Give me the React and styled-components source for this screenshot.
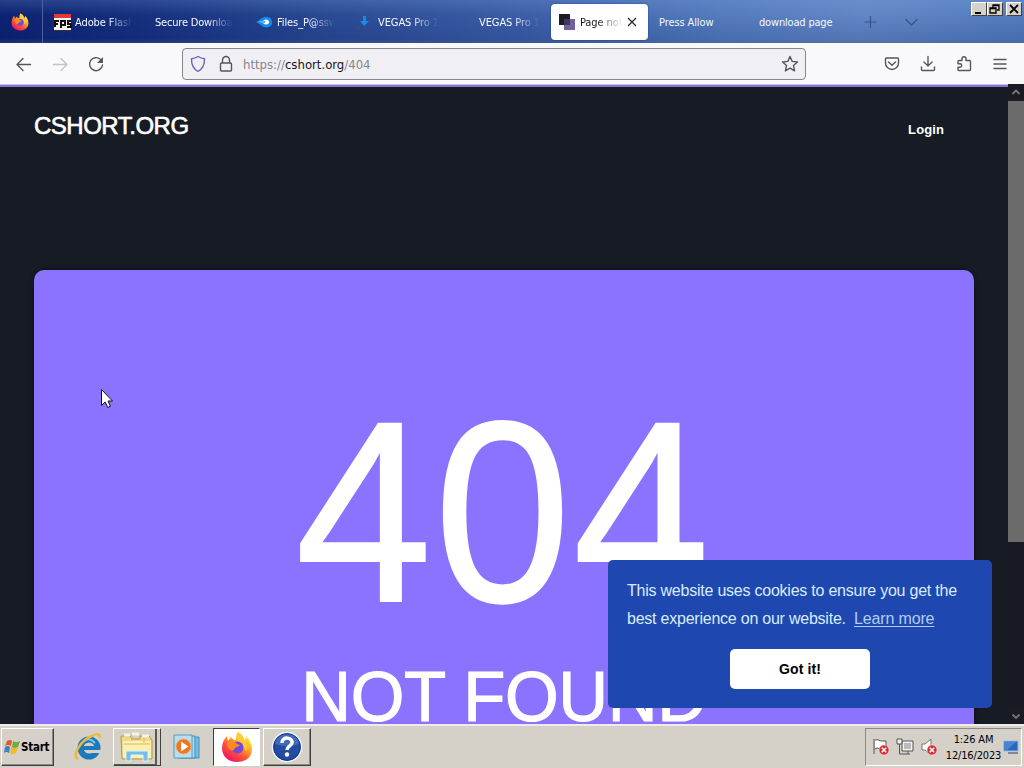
import React from "react";
import styled, { createGlobalStyle } from "styled-components";

const Global = createGlobalStyle`
  * { box-sizing: border-box; }
  body { margin: 0; background: #171a22; overflow: hidden; }
`;

const ui = `"DejaVu Sans Condensed", "DejaVu Sans", sans-serif`;
const web = `"Liberation Sans", Arial, sans-serif`;

const Screen = styled.div`
  width: 1024px;
  height: 768px;
  display: flex;
  flex-direction: column;
  overflow: hidden;
  font-family: ${ui};
  font-stretch: condensed;
`;

/* Tab strip */
const TabStrip = styled.header`
  position: relative;
  height: 43px;
  flex: none;
  display: flex;
  background:
    linear-gradient(180deg, rgba(130, 170, 225, 0.22), rgba(255, 255, 255, 0) 35%, rgba(0, 20, 90, 0.14) 90%, rgba(60, 80, 110, 0.4)),
    linear-gradient(97deg, #0b2270 0%, #16307e 14%, #2a4a93 32%, #3d5fa8 52%, #537bbd 70%, #6186c4 84%, #537cbd 100%);
`;
const HomeTab = styled.div`
  width: 43px;
  border-right: 1px solid #4a62a2;
  padding: 13px 0 0 11px;
  margin-right: 3px;
`;
const Tab = styled.div`
  width: ${(p) => p.$width || 101}px;
  height: 36px;
  margin: 4px ${(p) => (p.$active ? 3 : 0)}px 0 ${(p) => (p.$active ? 1 : 0)}px;
  padding: 2px 8px 0;
  display: flex;
  align-items: center;
  gap: 3px;
  border-radius: 4px;
  color: ${(p) => (p.$active ? "#15141a" : "#f4f8ff")};
  background: ${(p) => (p.$active ? "#fff" : "transparent")};
  box-shadow: ${(p) => (p.$active ? "0 0 2px #203d7d" : "none")};
`;
const TabIcon = styled.span`
  width: 18px;
  height: 18px;
  flex: none;
  svg { display: block; }
`;
const TabLabel = styled.span`
  flex: ${(p) => (p.$width ? "none" : 1)};
  width: ${(p) => (p.$width ? p.$width + "px" : "auto")};
  min-width: 0;
  overflow: hidden;
  white-space: nowrap;
  font-size: 11px;
  line-height: 16px;
  letter-spacing: ${(p) => p.$spacing ?? -0.1}px;
  mask-image: ${(p) => (p.$full ? "none" : "linear-gradient(90deg, #000 calc(100% - 26px), transparent)")};
`;
const StripIcon = styled.span`
  width: 41px;
  padding-top: 14px;
  text-align: center;
`;
const WindowButtons = styled.div`
  position: absolute;
  top: 2px;
  right: 2px;
  display: flex;
`;
const WindowButton = styled.span`
  width: 16px;
  height: 14px;
  margin-left: ${(p) => (p.$apart ? 3 : 0)}px;
  background: #d6d2ca;
  border: 1px solid;
  border-color: #fff #404040 #404040 #fff;
  svg { display: block; }
`;

/* Navigation toolbar */
const NavBar = styled.div`
  height: 41px;
  flex: none;
  display: flex;
  align-items: center;
  background: #f9f9fb;
  padding: 1px 14px 0;
`;
const NavButton = styled.span`
  width: 20px;
  height: 20px;
  flex: none;
  margin-right: ${(p) => p.$gap ?? 16}px;
  svg { display: block; }
`;
const UrlBar = styled.div`
  width: 624px;
  height: 32px;
  flex: none;
  margin: 0 76px 0 60px;
  display: flex;
  align-items: center;
  border: 1px solid #85858f;
  border-radius: 4px;
  background: #f0f0f4;
  padding: 0 5px;
`;
const UrlText = styled.span`
  flex: 1;
  margin-left: 7px;
  font-size: 13px;
  letter-spacing: 0;
  color: #85858d;
  b { font-weight: 400; color: #15141a; }
`;
const UrlIcon = styled.span`
  width: 20px;
  margin-right: ${(p) => p.$gap || 0}px;
  svg { display: block; }
`;

/* Web page */
const Viewport = styled.div`
  height: 640px;
  flex: none;
  position: relative;
  display: flex;
  background: #171b23;
`;
const Page = styled.main`
  width: 1008px;
  height: 640px;
  border-top: 1px solid #cbc3ec;
  box-shadow: inset 0 2px #8874c8;
  overflow: hidden;
  padding: 2px 34px 0;
  font-family: ${web};
  font-stretch: normal;
  color: #fff;
`;
const SiteHeader = styled.div`
  height: 183px;
  display: flex;
  justify-content: space-between;
  padding: 25px 30px 0 0;
`;
const Brand = styled.div`
  font-size: 24px;
  line-height: 28px;
  letter-spacing: -0.5px;
  -webkit-text-stroke: 0.6px #fff;
`;
const Login = styled.div`
  margin-top: 9px;
  font-size: 13px;
  line-height: 18px;
  font-weight: 700;
  letter-spacing: 0.1px;
`;
const Hero = styled.section`
  height: 520px;
  border-radius: 10px 10px 0 0;
  background: #8b73ff;
  box-shadow: 0 0 4px #0c0d14;
  padding-top: 104px;
  text-align: center;
  white-space: nowrap;
`;
const ErrorCode = styled.div`
  font-size: 246px;
  line-height: 275px;
  height: 275px;
  letter-spacing: 2px;
  padding-right: 1px;
  -webkit-text-stroke: 1.6px #fff;
  transform: scaleY(1.05);
`;
const ErrorText = styled.div`
  margin-top: 9px;
  font-size: 69px;
  line-height: 80px;
  letter-spacing: -0.4px;
  -webkit-text-stroke: 1.1px #fff;
  transform: scaleY(1.02);
`;
const ScrollBar = styled.div`
  width: 16px;
  display: flex;
  flex-direction: column;
  background: #171a22;
`;
const ScrollArrow = styled.span`
  height: 17px;
  background: #191c23;
  svg { display: block; }
`;
const ScrollThumb = styled.span`
  height: 441px;
  background: #6b6b6b;
  margin-bottom: auto;
`;
const Cookie = styled.aside`
  position: absolute;
  left: 608px;
  top: 476px;
  width: 384px;
  height: 148px;
  border-radius: 5px;
  background: #1e48b0;
  color: #d8ecff;
  font-family: ${web};
  font-stretch: normal;
  padding: 17px 19px;
  display: flex;
  flex-direction: column;
`;
const CookieText = styled.p`
  margin: 0;
  font-size: 16px;
  line-height: 28px;
  white-space: nowrap;
  letter-spacing: -0.23px;
`;
const Learn = styled.a`
  margin-left: 4px;
  color: #b2cdf1;
  letter-spacing: -0.15px;
  text-decoration: underline;
  text-underline-offset: 2px;
`;
const Accept = styled.button`
  width: 140px;
  height: 40px;
  margin: 16px 0 0 103px;
  flex: none;
  border: 0;
  border-radius: 5px;
  background: #fff;
  color: #000;
  font: 700 14px ${web};
  letter-spacing: 0.1px;
`;
const Pointer = styled.span`
  position: absolute;
  left: 100px;
  top: 304px;
`;

/* Taskbar */
const Taskbar = styled.footer`
  height: 44px;
  flex: none;
  display: flex;
  align-items: flex-start;
  background: #d5d1c9;
  border-top: 2px solid #eeece7;
  padding: 2px 2px 0 1px;
`;
const StartButton = styled.div`
  width: 53px;
  height: 38px;
  margin-right: 15px;
  display: flex;
  align-items: center;
  padding-left: 2px;
  font: 700 11.5px "DejaVu Sans Condensed", sans-serif;
  font-stretch: condensed;
  letter-spacing: -0.25px;
  color: #000;
  border: 1px solid;
  border-color: #fff #404040 #404040 #fff;
  box-shadow: inset -1px -1px #8c8a84;
`;
const TaskButton = styled.div`
  width: ${(p) => p.$width || 47}px;
  height: 38px;
  margin-right: ${(p) => p.$gap || 0}px;
  display: flex;
  align-items: center;
  justify-content: center;
  border: 1px solid;
  border-color: ${(p) => (p.$flat ? "transparent" : p.$pressed ? "#404040 #fff #fff #404040" : "#fff #404040 #404040 #fff")};
  background: ${(p) => (p.$pressed ? "#fff" : "transparent")};
  box-shadow: ${(p) => (p.$stack ? "inset -3px 0 #d5d1c9, inset -5px -1px #5a5955" : p.$flat || p.$pressed ? "none" : "inset -1px -1px #8c8a84")};
`;
const Tray = styled.div`
  width: 157px;
  height: 38px;
  margin-left: auto;
  display: flex;
  align-items: center;
  gap: 6px;
  padding-left: 6px;
  border: 1px solid;
  border-color: #8b8983 #fff #fff #8b8983;
  svg { flex: none; }
`;
const Clock = styled.div`
  width: 57px;
  flex: none;
  display: flex;
  flex-direction: column;
  align-items: center;
  white-space: nowrap;
  font-size: 11px;
  line-height: 16px;
  letter-spacing: -0.15px;
  color: #000;
  margin: 2px -6px 0 1px;
`;

const line = { fill: "none", stroke: "#55555f", strokeWidth: 1.4, strokeLinecap: "round", strokeLinejoin: "round" };

function Firefox({ size, id }) {
  return (
    <svg width={size} height={size} viewBox="0 0 32 32">
      <defs>
        <linearGradient id={id} x1=".85" y1=".1" x2=".25" y2=".95">
          <stop stopColor="#fff044" />
          <stop offset=".35" stopColor="#ffad24" />
          <stop offset=".65" stopColor="#ff5438" />
          <stop offset="1" stopColor="#ed1764" />
        </linearGradient>
      </defs>
      <path fill={`url(#${id})`} d="M17 1c4 2 6 5 6 8 2-1 2-2 2-4 4 4 6 8 6 13 0 8-6 13-15 13S1 25 1 17c0-5 2-9 5-12l1 5 3-4c1 2 3 3 5 3 0-3 0-6 2-8Z" />
      <path fill="#ffcb36" d="M17 1c4 2 6 5 6 8 3 4 4 8 2 12-1-5-4-8-8-10-2-3-2-7 0-10Z" />
      <circle cx="16.500" cy="16.500" r="6" fill="#7548db" />
      <path fill="#ff8a22" d="M6 12c3-3 8-2 10 1l3 1c-1 2-4 1.500-5 3-1 2-2 3-4 2-3-1-4-4-4-7Z" />
    </svg>
  );
}

function RedCross({ x, y }) {
  return (
    <g transform={`translate(${x} ${y})`}>
      <circle r="5" fill="#d42e35" stroke="#f7d8d6" strokeWidth=".6" />
      <path d="M-2.200-2.200 2.200 2.200M2.200-2.200-2.200 2.200" stroke="#fff" strokeWidth="1.500" />
    </g>
  );
}

export default function App() {
  return (
    <Screen>
      <Global />
      <TabStrip>
        <HomeTab><Firefox size={18} id="foxSmall" /></HomeTab>
        <Tab>
          <TabIcon>
            <svg width="18" height="18"><path fill="#f2f2f2" d="M0 0h17v17H0z" /><path fill="#df3c38" d="M0 0h17v4H0z" /><path fill="none" stroke="#111" strokeWidth="2" d="M1 13V7h4M1 10h3M7 14V7h4v4H7M17 7h-3v3h3v3h-4" /><path fill="#333" d="M0 16h17v1H0z" /></svg>
          </TabIcon>
          <TabLabel $width={58}>Adobe Flash</TabLabel>
        </Tab>
        <Tab><TabLabel $width={78} $spacing={-0.2}>Secure Download</TabLabel></Tab>
        <Tab>
          <TabIcon>
            <svg width="18" height="18"><path fill="#168bef" d="M0 8c4-1 6-6 11-5 4 0 5 3 5 6 0 4-6 6-10 3-2-2-4-3-6-4Z" /><ellipse cx="10" cy="8" rx="3" ry="2.500" fill="#fff" /><path fill="#52b8ff" d="M2 7h7v2H6Z" /></svg>
          </TabIcon>
          <TabLabel $width={58}>Files_P@sswo</TabLabel>
        </Tab>
        <Tab>
          <TabIcon>
            <svg width="18" height="18"><path fill="#168bed" d="M6 2h3v5h3l-5 5-4-5h3Z" /><path stroke="#434968" strokeWidth="2" strokeDasharray="3 3" d="M0 14h15" /></svg>
          </TabIcon>
          <TabLabel $width={60}>VEGAS Pro 18</TabLabel>
        </Tab>
        <Tab $width={100}><TabIcon /><TabLabel $width={60}>VEGAS Pro 18</TabLabel></Tab>
        <Tab $active $width={97}>
          <TabIcon>
            <svg width="18" height="18"><path fill="#1d1b25" d="M0 0h11v11H0z" /><path fill="#70619f" d="M5 5h11v11H5z" /><path fill="#40375f" d="M5 5h6v6H5z" /></svg>
          </TabIcon>
          <TabLabel $width={43}>Page not found</TabLabel>
          <svg width="12" height="12"><path d="m2 1 8 8M10 1 2 9" stroke="#222" strokeWidth="1.200" /></svg>
        </Tab>
        <Tab $width={100}><TabLabel $full>Press Allow</TabLabel></Tab>
        <Tab $width={99}><TabLabel $full $spacing={-0.18}>download page</TabLabel></Tab>
        <StripIcon><svg width="14" height="14"><path d="M6.500 1v12M.500 7h12" stroke="#3b5386" strokeWidth="1.200" /></svg></StripIcon>
        <StripIcon><svg width="14" height="14"><path d="m.500 4 6 6 6-6" fill="none" stroke="#3b5386" strokeWidth="1.300" /></svg></StripIcon>
        <WindowButtons>
          <WindowButton><svg width="14" height="12"><path fill="#000" d="M3 9h6v2H3z" /></svg></WindowButton>
          <WindowButton><svg width="14" height="12"><path d="M5 5V2h6v5H9M2 5h6v5H2zM5 2.700h6M2 5.600h6" fill="none" stroke="#000" strokeWidth="1.300" /></svg></WindowButton>
          <WindowButton $apart><svg width="14" height="12"><path d="m3 2 8 8M11 2 3 10" stroke="#000" strokeWidth="1.800" /></svg></WindowButton>
        </WindowButtons>
      </TabStrip>

      <NavBar>
        <NavButton><svg width="20" height="20"><path {...line} d="M16.500 10.500H4m5-6-6 6 6 6" /></svg></NavButton>
        <NavButton><svg width="20" height="20"><path {...line} stroke="#c2c2c8" d="M3.500 10.500H16m-5-6 6 6-6 6" /></svg></NavButton>
        <NavButton><svg width="20" height="20"><path {...line} d="M14.600 5.500A6.500 6.500 0 1 0 16.500 11" /><path fill="#55555f" d="M17 3v6h-6Z" /></svg></NavButton>
        <UrlBar>
          <UrlIcon $gap={8}><svg width="20" height="20"><path {...line} stroke="#6964bd" d="M10 2.500c2 1.300 4 2 6.500 2.300.2 5.200-1.300 9.700-6.500 12.700-5.200-3-6.700-7.500-6.500-12.700C6 4.500 8 3.800 10 2.500Z" /></svg></UrlIcon>
          <UrlIcon><svg width="20" height="20"><path {...line} d="M6.500 9V6a3.500 3.500 0 0 1 7 0v3M5.500 9h9q1 0 1 1v6q0 1-1 1h-9q-1 0-1-1v-6q0-1 1-1Z" /></svg></UrlIcon>
          <UrlText>https://<b>cshort.org</b>/404</UrlText>
          <UrlIcon><svg width="20" height="20"><path {...line} d="m10 2.500 2.200 4.900 5.300.6-4 3.600 1.100 5.300-4.600-2.700-4.600 2.700 1.100-5.300-4-3.600 5.300-.6Z" /></svg></UrlIcon>
        </UrlBar>
        <NavButton><svg width="20" height="20"><path {...line} d="M4.500 4h11q1 0 1 1v4a6.500 6.500 0 0 1-13 0V5q0-1 1-1ZM6.500 8l3.500 3.300L13.500 8" /></svg></NavButton>
        <NavButton><svg width="20" height="20"><path {...line} d="M10 2.500V12m-4-4 4 4 4-4M3.500 13v2.500q0 1 1 1h11q1 0 1-1V13" /></svg></NavButton>
        <NavButton><svg width="20" height="20"><path {...line} d="M5 6.500h3V4.800a2 2 0 0 1 4 0v1.700h3.500q1 0 1 1v8q0 1-1 1H5q-1 0-1-1v-2.300h2a1.700 1.700 0 0 0 0-3.400H4V7.500q0-1 1-1Z" /></svg></NavButton>
        <NavButton $gap={0}><svg width="20" height="20"><path {...line} d="M4 5.500h12M4 10h12M4 14.500h12" /></svg></NavButton>
      </NavBar>

      <Viewport>
        <Page>
          <SiteHeader><Brand>CSHORT.ORG</Brand><Login>Login</Login></SiteHeader>
          <Hero>
            <ErrorCode>404</ErrorCode>
            <ErrorText>NOT FOUND</ErrorText>
          </Hero>
        </Page>
        <ScrollBar>
          <ScrollArrow><svg width="16" height="16"><path d="m4.500 10 3.500-3.500 3.500 3.500" fill="none" stroke="#74777b" strokeWidth="1.800" /></svg></ScrollArrow>
          <ScrollThumb />
          <ScrollArrow><svg width="16" height="16"><path d="m4.500 7.500 3.500 3.500 3.500-3.500" fill="none" stroke="#74777b" strokeWidth="1.800" /></svg></ScrollArrow>
        </ScrollBar>
        <Cookie>
          <CookieText>This website uses cookies to ensure you get the</CookieText>
          <CookieText>best experience on our website. <Learn>Learn more</Learn></CookieText>
          <Accept>Got it!</Accept>
        </Cookie>
        <Pointer><svg width="14" height="22"><path d="M1.500 1.500v16l3.700-3.500 2.500 5.500 2.700-1.200L8 13h4.500Z" fill="#fff" stroke="#111" /></svg></Pointer>
      </Viewport>

      <Taskbar>
        <StartButton>
          <svg width="17" height="18"><path fill="#e35a2a" d="M3 3q3-2 5 0L7 8Q4 6 1 8Z" /><path fill="#71ad3d" d="M9 3q3 2 7 0l-2 6q-4 2-6 0Z" /><path fill="#3b81c9" d="M1 9q3-2 5 0l-1 6q-3-2-5 0Z" /><path fill="#f1b92c" d="M7 9q3 2 7 0l-2 6q-4 2-6 0Z" /></svg>
          Start
        </StartButton>
        <TaskButton $flat $width={38} $gap={6}>
          <svg width="32" height="32"><circle cx="17" cy="17" r="8.500" fill="none" stroke="#1d79b9" strokeWidth="6" /><path d="M10 17h16" stroke="#1d79b9" strokeWidth="4" /><path fill="#d5d1c9" d="M18 19h12v3H18z" /><path d="M11 11q6-6 12 1" fill="none" stroke="#72c9ec" strokeWidth="2" /><path d="M6 28C-1 25 9 9 20 5q8-4 8 2" fill="none" stroke="#efb83a" strokeWidth="2.400" /></svg>
        </TaskButton>
        <TaskButton $stack $width={48} $gap={3}>
          <svg width="34" height="32"><path fill="#eedb8a" stroke="#b49849" d="M1 5h9l2 3h8V5h9l3 4v19H2Z" /><path fill="#fff0ae" d="M3 10h28v17H3z" /><path d="M4 13h26M12 3v7M24 6v6" stroke="#d3b965" /><path d="M4 4h6M12 3h7M22 5h7" stroke="#f6f5dc" strokeWidth="3" /><path fill="#76bee5" stroke="#d6f4ff" d="M6 30V20h22v10h-5v-6H11v6Z" /></svg>
        </TaskButton>
        <TaskButton $flat $width={46} $gap={3}>
          <svg width="28" height="28"><path fill="#75bce2" stroke="#438ebc" d="M9 4h17v21H9z" /><path fill="#a6d8f0" stroke="#438ebc" d="M5 3h17v22H5z" /><path fill="#b8dff0" stroke="#559abf" d="M1 2h18v23H1z" /><circle cx="10.500" cy="13.500" r="7.500" fill="#ec7622" stroke="#f6ab6c" /><path fill="#fff" d="m8 8.500 7.500 5-7.500 5Z" /></svg>
        </TaskButton>
        <TaskButton $pressed $gap={3}><Firefox size={32} id="foxLarge" /></TaskButton>
        <TaskButton $width={48}>
          <svg width="32" height="32"><circle cx="16" cy="16" r="14.500" fill="#234da2" stroke="#eef4ff" strokeWidth="1.500" /><circle cx="16" cy="16" r="13.300" fill="none" stroke="#18347b" /><path fill="#527bc9" opacity=".65" d="M4 13C5 0 27 0 28 13Q16 17 4 13Z" /><path d="M11 12c0-7 11-6 10 0-.500 3-5 3-5 7" fill="none" stroke="#fff" strokeWidth="3.500" /><circle cx="16" cy="23.500" r="2.200" fill="#fff" /></svg>
        </TaskButton>
        <Tray>
          <svg width="18" height="20"><path fill="#fff" stroke="#555" d="M3 3q3-1 6 1h5v8H8q-3-2-5 0M2 2v15" /><RedCross x={12} y={13} /></svg>
          <svg width="18" height="20"><path fill="#f2f2ef" stroke="#555" d="M6 4h11v10H6z" /><path fill="#bbb" d="M8 6h7v6H8z" /><path fill="#eee" stroke="#555" d="M1 2h5v5H1z" /><path d="M3.500 7v10H14M12 14v3" fill="none" stroke="#555" /></svg>
          <svg width="18" height="20"><path fill="#fff" stroke="#777" d="M2 7h3l6-5v16l-6-5H2Z" /><RedCross x={12} y={13} /></svg>
          <Clock><span>1:26 AM</span><span>12/16/2023</span></Clock>
          <svg width="17" height="16"><path fill="#2967bd" stroke="#95bee8" d="M1.500 2H16v10H1.500z" /><path fill="#4685cf" d="M2 3h12L5 11H2z" /><path stroke="#274464" d="M6 14h10" /></svg>
        </Tray>
      </Taskbar>
    </Screen>
  );
}
